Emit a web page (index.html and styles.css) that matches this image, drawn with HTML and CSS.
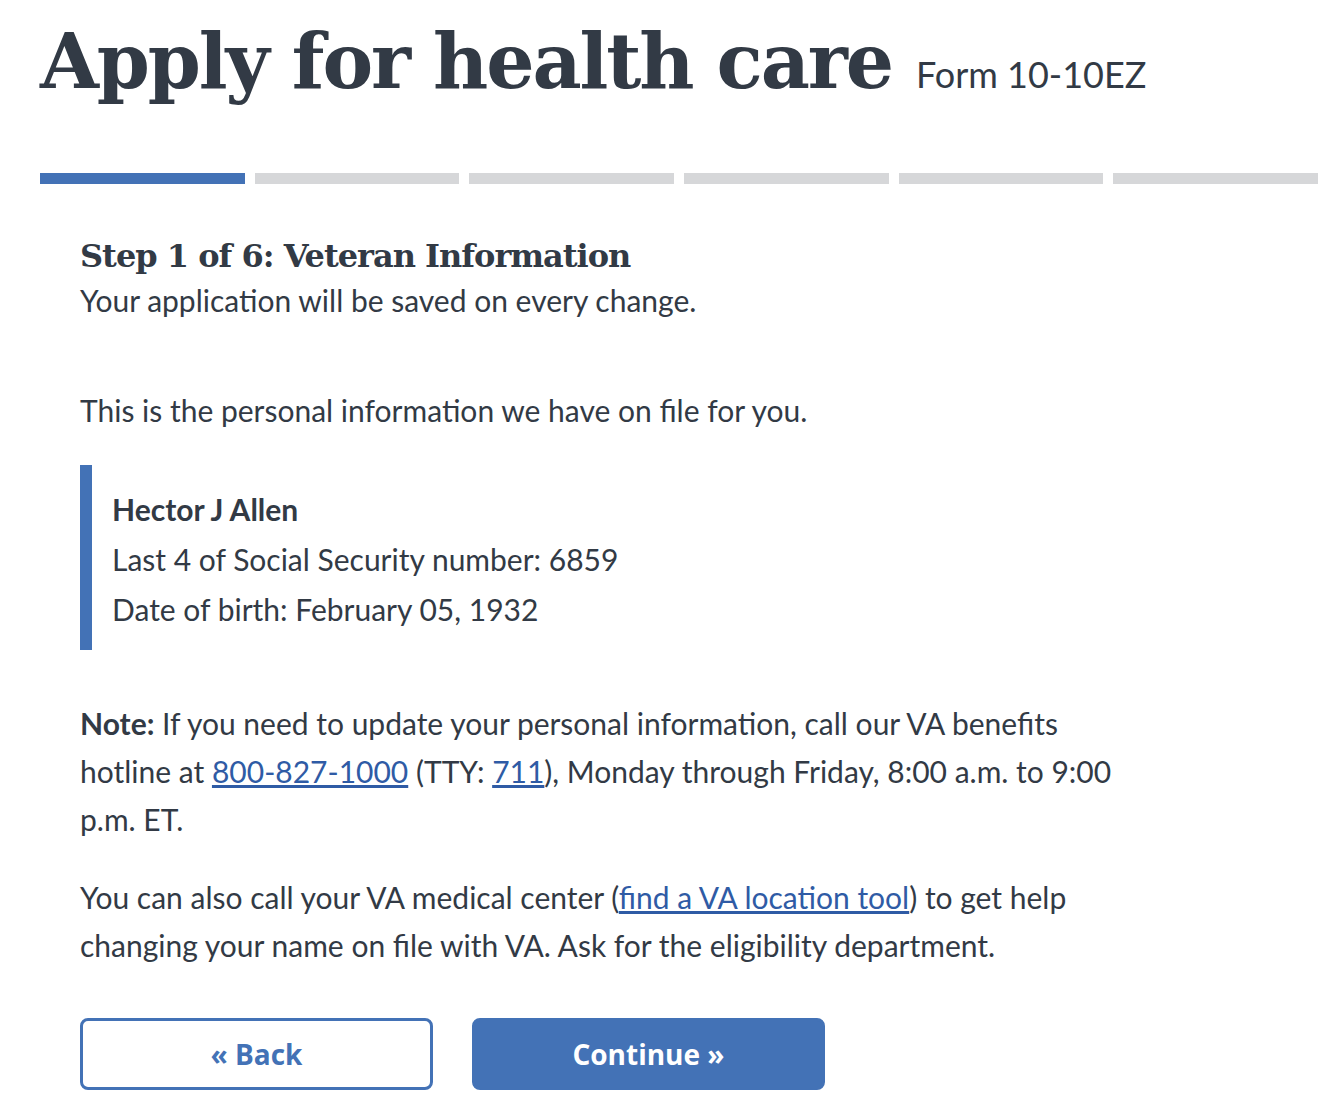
FILE: index.html
```html
<!DOCTYPE html>
<html lang="en">
<head>
<meta charset="utf-8">
<title>Apply for health care</title>
<link rel="stylesheet" href="styles.css">
</head>
<body>
<main class="page">
  <header class="title-row">
    <h1 class="title">Apply for health care</h1>
    <span class="subtitle">Form 10-10EZ</span>
  </header>
  <div class="progress">
    <div class="seg seg-active"></div>
    <div class="seg"></div>
    <div class="seg"></div>
    <div class="seg"></div>
    <div class="seg"></div>
    <div class="seg"></div>
  </div>
  <section class="content">
    <h2 class="step">Step 1 of 6: Veteran Information</h2>
    <p class="saved">Your application will be saved on every change.</p>
    <p class="intro">This is the personal information we have on file for you.</p>
    <div class="info">
      <p class="name">Hector J Allen</p>
      <p class="line">Last 4 of Social Security number: 6859</p>
      <p class="line">Date of birth: February 05, 1932</p>
    </div>
    <p class="note"><strong>Note:</strong> If you need to update your personal information, call our VA benefits hotline at <a href="#">800-827-1000</a> (TTY: <a href="#">711</a>), Monday through Friday, 8:00 a.m. to 9:00 p.m. ET.</p>
    <p class="note">You can also call your VA medical center (<a href="#">find a VA location tool</a>) to get help changing your name on file with VA. Ask for the eligibility department.</p>
    <div class="buttons">
      <button class="btn btn-back">« Back</button>
      <button class="btn btn-continue">Continue »</button>
    </div>
  </section>
</main>
</body>
</html>
```
FILE: styles.css
```css
html, body {
  margin: 0;
  padding: 0;
  background: #ffffff;
}
body {
  color: #323a45;
  font-family: "Lato", "Open Sans", sans-serif;
}
.page {
  padding: 0 24px 0 40px;
}
.title-row {
  display: flex;
  align-items: baseline;
  gap: 24px;
  padding-top: 12px;
}
.title {
  margin: 0;
  font-family: "DejaVu Serif", serif;
  font-weight: 700;
  font-size: 76px;
  line-height: 100px;
  letter-spacing: -2.15px;
}
.subtitle {
  font-size: 36px;
  font-weight: 400;
}
.progress {
  display: flex;
  gap: 10px;
  margin-top: 61px;
}
.seg {
  flex: 1;
  height: 11px;
  background: #d6d7d9;
}
.seg-active {
  background: #4372b6;
}
.content {
  padding: 52px 0 0 40px;
  max-width: 1060px;
}
.step {
  margin: 0;
  font-family: "DejaVu Serif", serif;
  font-weight: 700;
  font-size: 32px;
  line-height: 40px;
  letter-spacing: -1px;
}
.saved {
  margin: 4px 0 0;
  font-size: 30px;
  line-height: 40px;
}
.intro {
  margin: 70px 0 0;
  font-size: 30px;
  line-height: 40px;
}
.info {
  margin-top: 35px;
  border-left: 12px solid #4372b6;
  padding: 19px 0 16px 20px;
}
.info p {
  margin: 0;
  font-size: 30px;
  line-height: 50px;
}
.info .name {
  font-weight: 700;
}
.note {
  margin: 49px 0 0;
  font-size: 30px;
  line-height: 48px;
}
.note + .note {
  margin-top: 30px;
}
.note a {
  color: #2f5ba5;
}
.buttons {
  display: flex;
  gap: 39px;
  margin-top: 49px;
}
.btn {
  width: 353px;
  height: 72px;
  border-radius: 8px;
  font-family: "Open Sans", sans-serif;
  font-weight: 700;
  font-size: 28px;
  cursor: pointer;
}
.btn-back {
  background: #ffffff;
  border: 3px solid #4372b6;
  color: #4372b6;
}
.btn-continue {
  background: #4372b6;
  border: 3px solid #4372b6;
  color: #ffffff;
}
```
